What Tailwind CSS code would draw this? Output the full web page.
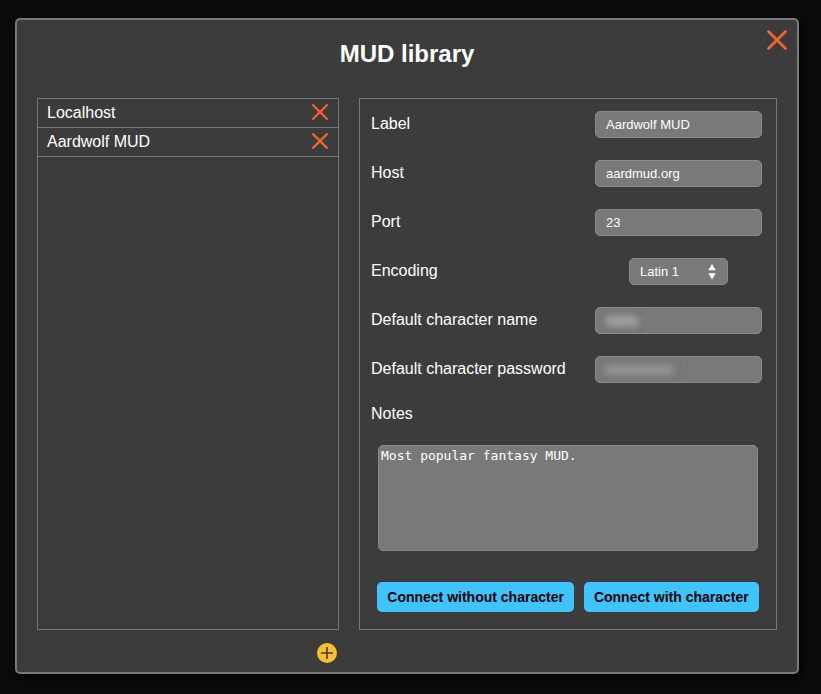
<!DOCTYPE html>
<html lang="en">
<head>
<meta charset="utf-8">
<meta name="viewport" content="width=device-width, initial-scale=1">
<title>MUD library</title>
<script src="https://cdn.jsdelivr.net/npm/@tailwindcss/browser@4"></script>
</head>
<body class="flex min-h-screen bg-[#0b0b0b] pt-[18px] pr-[22px] pb-5 pl-[15px] font-['Liberation_Sans',Arial,sans-serif] text-base text-white">
<main role="dialog" aria-labelledby="title" class="relative flex flex-1 flex-col rounded-[5px] border-2 border-[#797979] bg-[#3c3c3c] px-5 shadow-[3px_3px_8px_#000]">
  <h1 id="title" class="pt-[17px] pb-[27px] text-center text-2xl leading-[34px] font-bold">MUD library</h1>
  <button type="button" aria-label="Close" class="absolute top-2.5 right-2.5 size-5">
    <svg viewBox="0 0 20 20" class="size-5" fill="none" stroke="#f4642c" stroke-width="2.8" stroke-linecap="round"><path d="M1.5 1.5 18.5 18.5M18.5 1.5 1.5 18.5"/></svg>
  </button>

  <div class="grid flex-1 grid-cols-[302fr_418fr] gap-5">
    <ul class="border border-[#797979]">
      <li class="flex h-[29px] items-center justify-between border-b border-[#797979] pr-2.5 pl-[9px]">
        <a href="#localhost">Localhost</a>
        <button type="button" aria-label="Delete Localhost" class="mb-0.5 size-4">
          <svg viewBox="0 0 16 16" class="size-4" fill="none" stroke="#f4642c" stroke-width="2.3" stroke-linecap="round"><path d="M1.2 1.2 14.8 14.8M14.8 1.2 1.2 14.8"/></svg>
        </button>
      </li>
      <li class="flex h-[29px] items-center justify-between border-b border-[#797979] pr-2.5 pl-[9px]">
        <a href="#aardwolf">Aardwolf MUD</a>
        <button type="button" aria-label="Delete Aardwolf MUD" class="mb-0.5 size-4">
          <svg viewBox="0 0 16 16" class="size-4" fill="none" stroke="#f4642c" stroke-width="2.3" stroke-linecap="round"><path d="M1.2 1.2 14.8 14.8M14.8 1.2 1.2 14.8"/></svg>
        </button>
      </li>
    </ul>

    <form class="flex flex-col border border-[#797979] pt-px pr-3.5 pl-[11px]">
      <div class="flex h-[49px] items-center justify-between">
        <label for="label" class="pb-0.5">Label</label>
        <input id="label" type="text" value="Aardwolf MUD" class="h-[27px] w-[167px] rounded-[5px] border border-[#8b8b8b] bg-[#797979] px-2.5 text-[13px]">
      </div>
      <div class="flex h-[49px] items-center justify-between">
        <label for="host" class="pb-0.5">Host</label>
        <input id="host" type="text" value="aardmud.org" class="h-[27px] w-[167px] rounded-[5px] border border-[#8b8b8b] bg-[#797979] px-2.5 text-[13px]">
      </div>
      <div class="flex h-[49px] items-center justify-between">
        <label for="port" class="pb-0.5">Port</label>
        <input id="port" type="text" value="23" class="h-[27px] w-[167px] rounded-[5px] border border-[#8b8b8b] bg-[#797979] px-2.5 text-[13px]">
      </div>
      <div class="flex h-[49px] items-center justify-between">
        <label for="encoding" class="pb-0.5">Encoding</label>
        <div class="flex w-[167px] justify-center">
          <div class="relative">
            <select id="encoding" class="h-[27px] w-[99px] appearance-none rounded-[5px] border border-[#8b8b8b] bg-[#797979] px-2.5 text-[13px]">
              <option>Latin 1</option>
              <option>UTF-8</option>
            </select>
            <svg viewBox="0 0 8 16" class="pointer-events-none absolute top-[6px] right-3 h-4 w-2" fill="#fff"><path d="M4 0 7.7 6.3H.3zM4 15.6 .3 9.3h7.4z"/></svg>
          </div>
        </div>
      </div>
      <div class="flex h-[49px] items-center justify-between">
        <label for="name" class="pb-0.5">Default character name</label>
        <div class="relative">
          <input id="name" type="text" class="block h-[27px] w-[167px] rounded-[5px] border border-[#8b8b8b] bg-[#797979] px-2.5 text-[13px]">
          <div class="pointer-events-none absolute top-[3px] left-2 h-[22px] w-10 overflow-hidden bg-[#717171]">
            <div class="mt-[5px] ml-0.5 h-3 w-[34px] bg-[#a3a3a3] blur-[4px]"></div>
          </div>
        </div>
      </div>
      <div class="flex h-[49px] items-center justify-between">
        <label for="password" class="pb-0.5">Default character password</label>
        <div class="relative">
          <input id="password" type="password" class="block h-[27px] w-[167px] rounded-[5px] border border-[#8b8b8b] bg-[#797979] px-2.5 text-[13px]">
          <div class="pointer-events-none absolute top-1 left-1.5 h-5 w-20 overflow-hidden bg-[#767676]">
            <div class="mt-1.5 ml-1 h-2 w-[68px] bg-[#a0a0a0] blur-[4px]"></div>
          </div>
        </div>
      </div>
      <label for="notes" class="flex h-10 items-center">Notes</label>
      <textarea id="notes" class="mt-[11px] mr-1 ml-[7px] h-[106px] resize-none rounded-[5px] border border-[#8b8b8b] bg-[#797979] px-0.5 py-0.5 font-['DejaVu_Sans_Mono',monospace] text-[13px] leading-4">Most popular fantasy MUD.</textarea>
      <div class="mt-auto mb-[17px] flex justify-center gap-2.5 pl-[3px] text-sm font-bold text-black">
        <button type="button" class="h-[30px] rounded-[5px] bg-[#40c4ff] px-2.5">Connect without character</button>
        <button type="button" class="h-[30px] rounded-[5px] bg-[#40c4ff] px-2.5">Connect with character</button>
      </div>
    </form>
  </div>

  <div class="grid grid-cols-[302fr_418fr] gap-5 pt-[13px] pb-[9px]">
    <div class="flex justify-end pr-0.5">
      <button type="button" aria-label="Add MUD" class="size-5">
        <svg viewBox="0 0 20 20" class="size-5"><circle cx="10" cy="10" r="10" fill="#fbc02d"/><path d="M10 4v12M4 10h12" stroke="#3c3c3c" stroke-width="1.6"/></svg>
      </button>
    </div>
  </div>
</main>
</body>
</html>
